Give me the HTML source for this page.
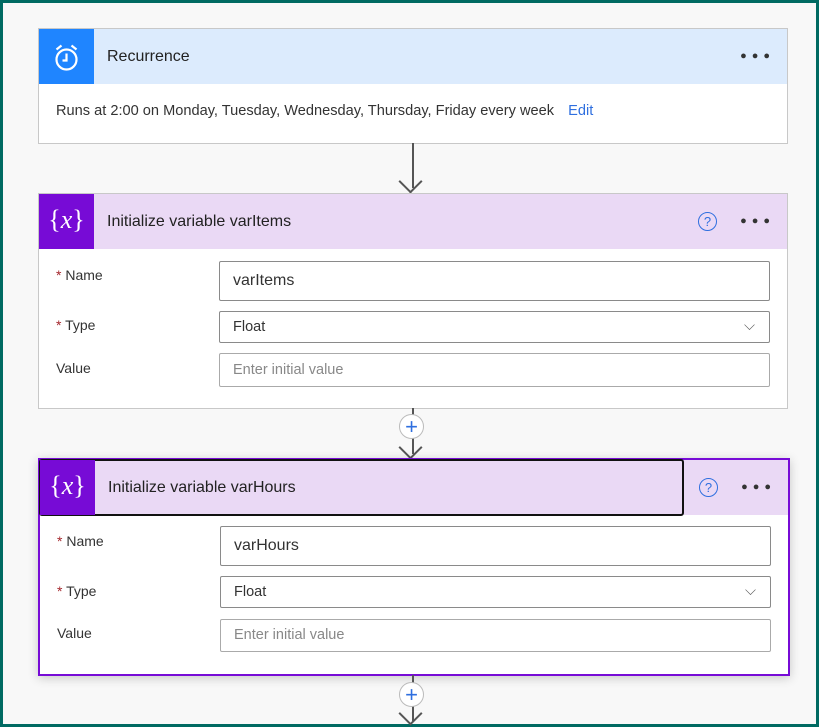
<html><head><style>
body{margin:0;width:819px;height:727px;overflow:hidden;font-family:"Segoe UI","Liberation Sans",sans-serif;}
.frame{position:absolute;left:0;top:0;width:813px;height:721px;border:3px solid #006a62;background:#f8f8f8;}
.card{position:absolute;left:38px;width:748px;background:#fff;border:1px solid #c8c8c8;}
.hd{position:relative;height:55px;}
.ic{position:absolute;left:0;top:0;width:55px;height:55px;}
.t{position:absolute;left:68px;top:19px;font-size:16px;color:#222;}
.dots{position:absolute;right:12px;top:21px;font-size:11px;letter-spacing:5px;color:#333;}
.q{position:absolute;right:70px;top:18px;width:17px;height:17px;border:1.5px solid #2f6fdf;border-radius:50%;color:#2f6fdf;font-size:13px;text-align:center;line-height:17px;}
.lab{position:absolute;left:17px;font-size:14px;color:#333;}
.lab b{color:#a4262c;font-weight:normal;}
.in{position:absolute;left:180px;width:551px;border:1px solid #8a8a8a;border-radius:2px;box-sizing:border-box;font-size:14.5px;padding-left:13px;color:#333;}
.ph{color:#888;border-color:#aaa;}
.line{position:absolute;left:412px;width:2px;background:#555;}
.arr{position:absolute;left:402px;width:15px;height:15px;border-right:2px solid #555;border-bottom:2px solid #555;transform:rotate(45deg);}
.plus{position:absolute;left:399px;width:25px;height:25px;border:1.5px solid #bbb;border-radius:50%;background:#fff;color:#2f6fdf;font-size:22px;line-height:23px;text-align:center;box-sizing:border-box;}
</style></head><body><div class="frame"></div>
<div class="card" style="top:28px;height:114px;">
<div class="hd" style="background:#dcebfd"><div class="ic" style="background:#1f85ff"><svg width="55" height="55"><circle cx="27.5" cy="30.5" r="10" fill="none" stroke="#fff" stroke-width="2.2"/><path d="M27.5 24.5v7h-4M17.5 20.5l5-4M37.5 20.5l-5-4" stroke="#fff" stroke-width="2.2" fill="none"/></svg></div><div class="t">Recurrence</div><div class="dots">●●●</div></div>
<div style="position:absolute;left:17px;top:74px;font-size:14.6px;color:#333">Runs at 2:00 on Monday, Tuesday, Wednesday, Thursday, Friday every week <span style="color:#2f6fdf;margin-left:10px">Edit</span></div>
</div>
<div class="line" style="top:143px;height:45px"></div><div class="arr" style="top:173px"></div>
<div class="card" style="top:193px;height:214px;">
<div class="hd" style="background:#ead9f5"><div class="ic" style="background:#770bd6;color:#fff;font-family:'Liberation Serif',serif;font-size:26px;line-height:52px;text-align:center">{<i>x</i>}</div><div class="t">Initialize variable varItems</div><div class="q">?</div><div class="dots">●●●</div></div>
<div class="lab" style="top:73px"><b>* </b>Name</div><div class="in" style="top:67px;height:40px;line-height:38px;font-size:16px">varItems</div>
<div class="lab" style="top:123px"><b>* </b>Type</div><div class="in" style="top:117px;height:32px;line-height:30px">Float<span style="position:absolute;right:14px;top:-1px;color:#555">&#x2335;</span></div>
<div class="lab" style="top:166px">Value</div><div class="in ph" style="top:159px;height:34px;line-height:32px">Enter initial value</div>
</div>
<div class="line" style="top:408px;height:46px"></div><div class="plus" style="top:414px">+</div><div class="arr" style="top:439px"></div>
<div class="card" style="top:458px;height:214px;border:2px solid #770bd6;box-shadow:0 2px 10px rgba(0,0,0,.2)">
<div class="hd" style="background:#ead9f5"><div style="position:absolute;left:0;top:0;width:641px;height:53px;border:2px solid #111;border-radius:3px;box-sizing:content-box;margin:-1px"></div><div class="ic" style="background:#770bd6;color:#fff;font-family:'Liberation Serif',serif;font-size:26px;line-height:52px;text-align:center">{<i>x</i>}</div><div class="t">Initialize variable varHours</div><div class="q">?</div><div class="dots">●●●</div></div>
<div class="lab" style="top:73px"><b>* </b>Name</div><div class="in" style="top:66px;height:40px;line-height:38px;font-size:16px">varHours</div>
<div class="lab" style="top:123px"><b>* </b>Type</div><div class="in" style="top:116px;height:32px;line-height:30px">Float<span style="position:absolute;right:14px;top:-1px;color:#555">&#x2335;</span></div>
<div class="lab" style="top:165px">Value</div><div class="in ph" style="top:159px;height:33px;line-height:31px">Enter initial value</div>
</div>
<div class="line" style="top:675px;height:46px"></div><div class="plus" style="top:682px">+</div><div class="arr" style="top:705px"></div>
</body></html>
